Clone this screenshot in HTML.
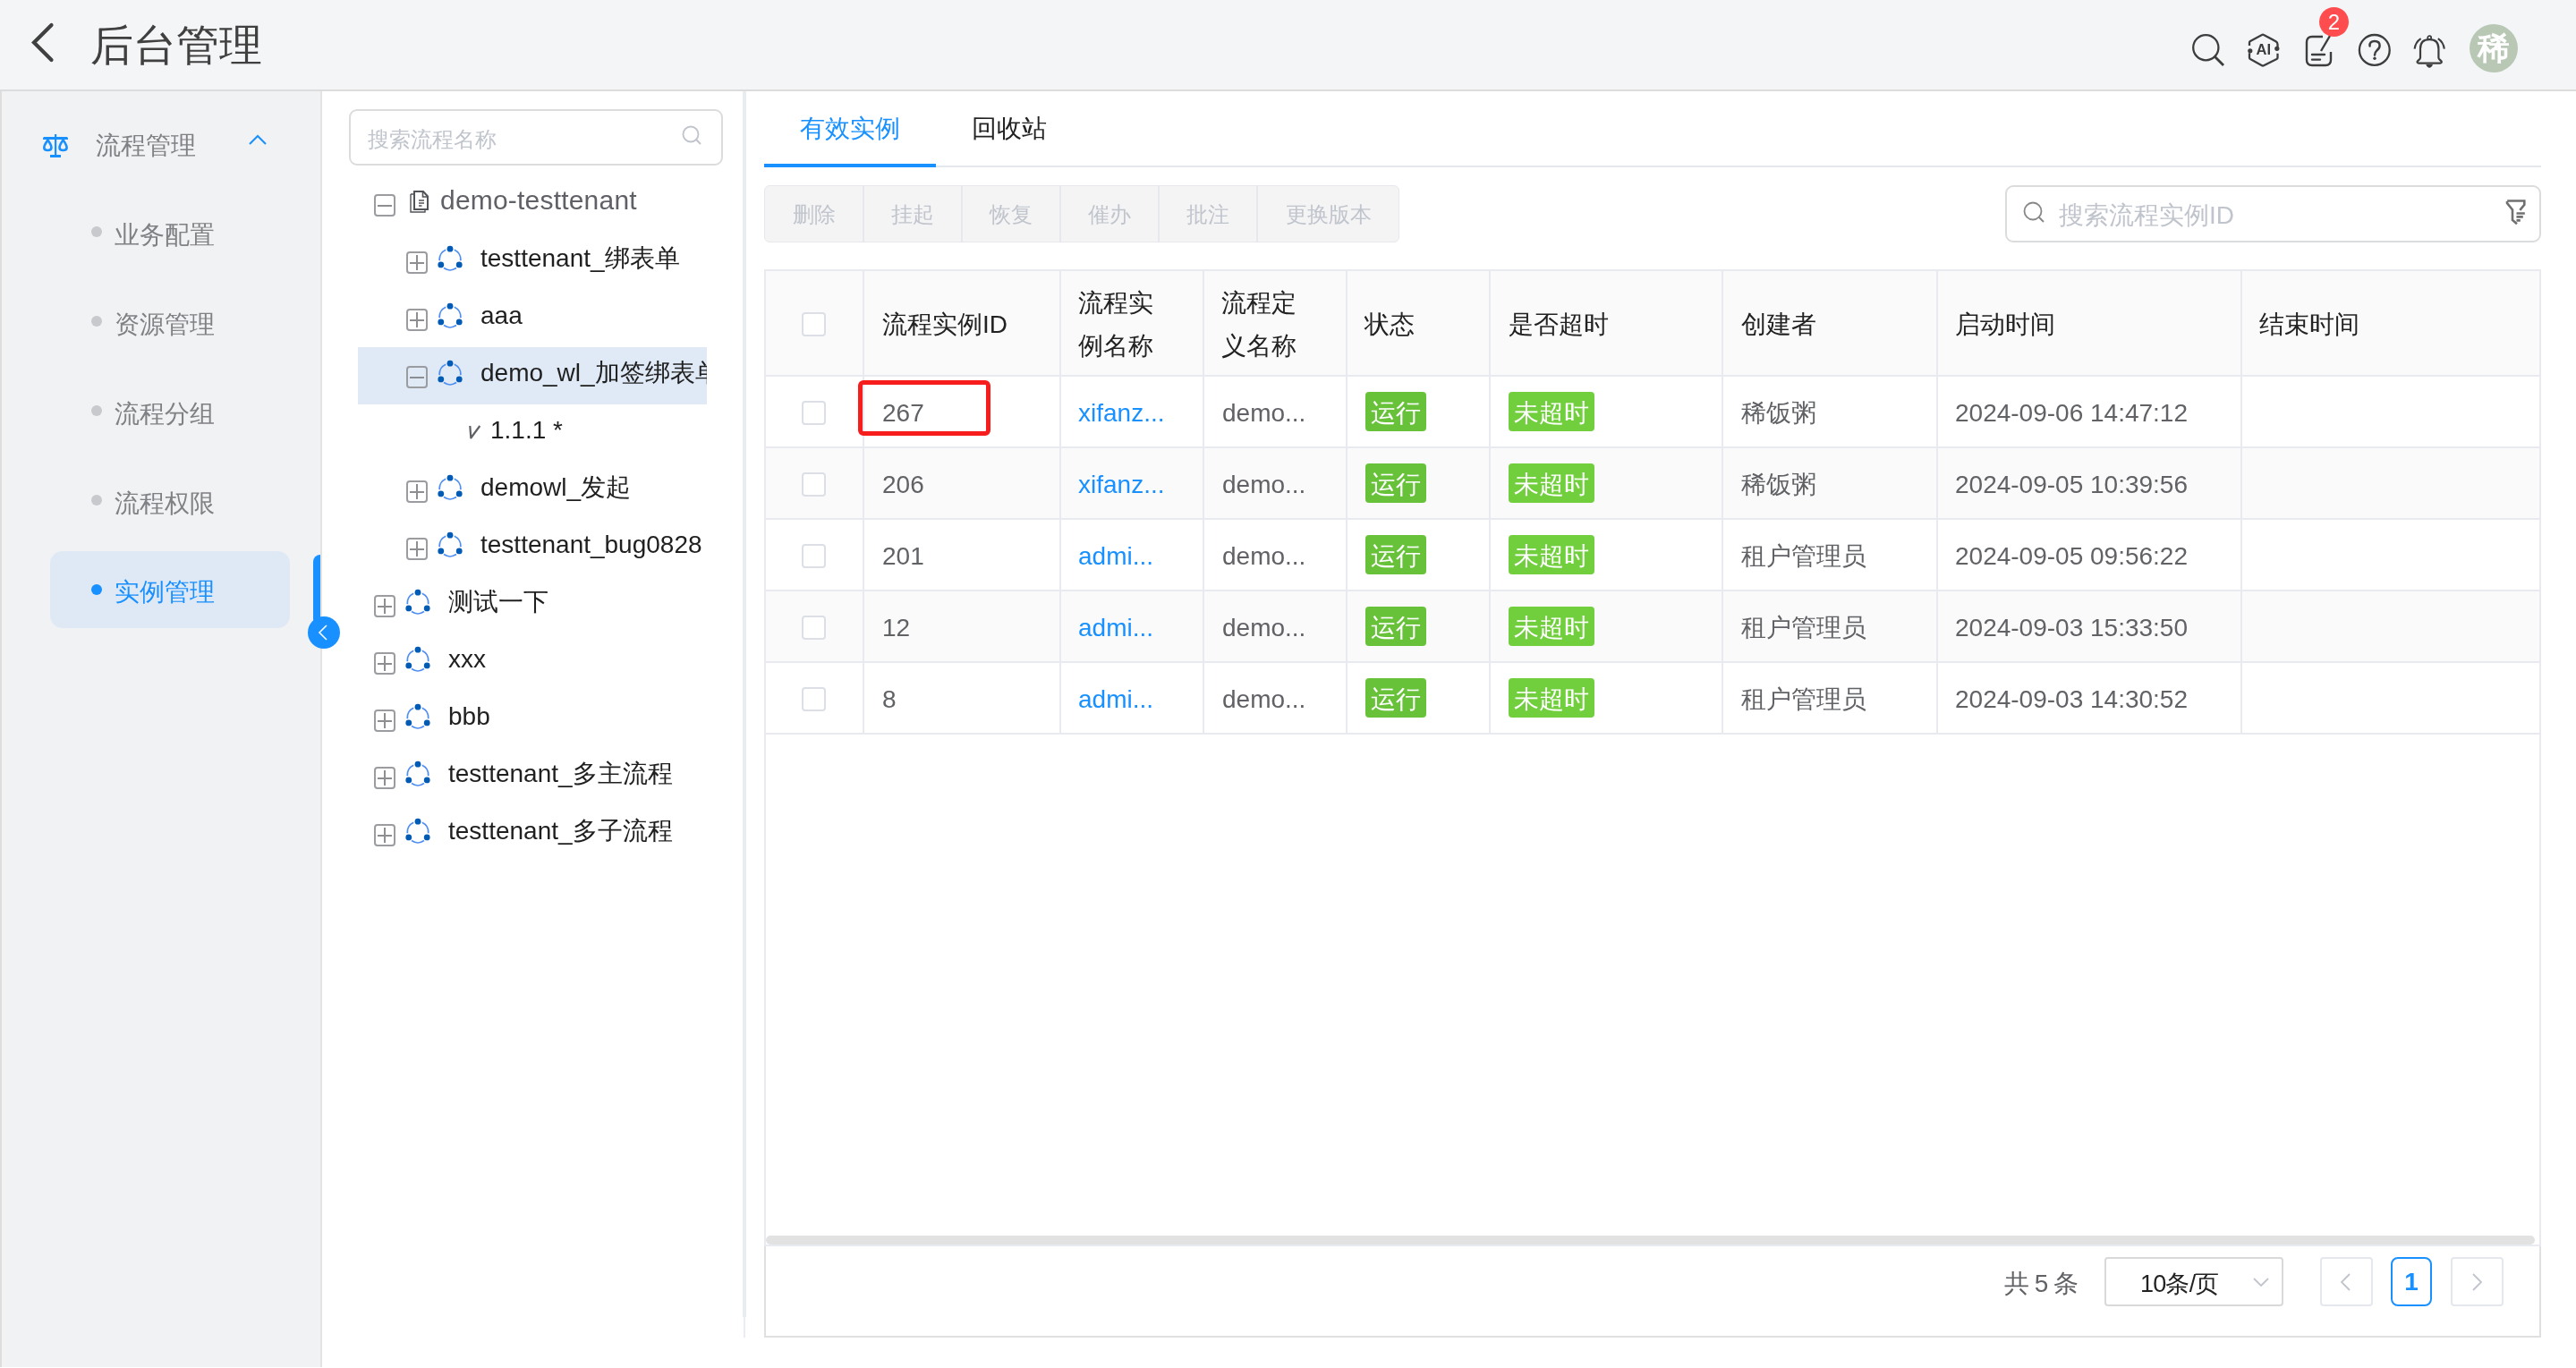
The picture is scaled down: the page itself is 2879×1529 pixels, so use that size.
<!DOCTYPE html>
<html><head><meta charset="utf-8">
<style>
*{box-sizing:border-box;margin:0;padding:0}
html,body{width:2879px;height:1529px;overflow:hidden;background:#fff;will-change:transform;font-family:"Liberation Sans",sans-serif;}
.a{position:absolute;white-space:nowrap}
#hdr{position:absolute;left:0;top:0;width:2879px;height:102px;background:#f4f5f7;border-bottom:2px solid #dcdcdc}
#side{position:absolute;left:0;top:102px;width:360px;height:1426px;background:#f1f2f4;border-left:2px solid #dedede;border-right:2px solid #e3e3e3}
.sub{position:absolute;white-space:nowrap;left:128px;font-size:27.5px;line-height:40px;color:#808184}
.dot{position:absolute;left:102px;width:12px;height:12px;border-radius:50%;background:#c8c9cc}
.tree{position:absolute;white-space:nowrap;font-size:28px;line-height:40px;color:#1f1f1f}
.pbox{position:absolute;width:24px;height:25px;border:2px solid #9a9ca0;border-radius:4px}
.pbox:before{content:"";position:absolute;left:2px;right:2px;top:10px;height:1.5px;background:#8c8e92}
.pbox.p:after{content:"";position:absolute;top:2px;bottom:2px;left:9px;width:2px;background:#8c8e92}
.ficon{position:absolute;width:28px;height:30px}
.btn{position:absolute;white-space:nowrap;top:209px;height:64px;font-size:24px;line-height:62px;color:#c0c4cc;text-align:center}
.th{position:absolute;white-space:nowrap;font-size:28px;line-height:48px;color:#222}
.td{position:absolute;white-space:nowrap;font-size:28px;line-height:40px;color:#606266}
.blue{color:#1890ff}
.tag{position:absolute;white-space:nowrap;height:44px;background:#67c23a;color:#fff;font-size:28px;line-height:47px;overflow:hidden;border-radius:4px;padding:0 6px}
.cb{position:absolute;left:896px;width:27px;height:27px;border:2px solid #dcdfe6;border-radius:4px;background:#fff}
.vl{position:absolute;top:302px;height:518px;width:2px;background:#e8eaf0}
.hl{position:absolute;left:854px;width:1984px;height:2px;background:#e8eaf0}
</style></head><body>
<!-- header -->
<div id="hdr"></div>
<svg class="a" style="left:34px;top:25px" width="28" height="46" viewBox="0 0 28 46"><path d="M23.5 3 L4 22.5 L23.5 42" fill="none" stroke="#404040" stroke-width="4.2" stroke-linecap="round"/></svg>
<div class="a" style="left:101px;top:21px;font-size:48px;line-height:60px;color:#404040">后台管理</div>

<!-- header icons -->
<svg class="a" style="left:2446px;top:35px" width="44" height="44" viewBox="0 0 44 44"><circle cx="19.3" cy="18.2" r="14.1" fill="none" stroke="#3d3d3d" stroke-width="2.3"/><path d="M29.5 28.5 L39 38" stroke="#3d3d3d" stroke-width="2.8"/></svg>
<svg class="a" style="left:2508px;top:35px" width="44" height="44" viewBox="0 0 44 44"><path d="M6 16 L6 12.6 Q6 11.6 7 11 L20 4 Q21 3.4 22 4 L35.5 11.2 Q37.5 12.4 37.5 14.6 L37.5 19.3 M37.5 24.8 L37.5 29.4 Q37.5 30.4 36.5 31 L22 38.2 Q21 38.8 20 38.2 L7 31 Q6 30.4 6 29.4 L6 24.2" fill="none" stroke="#3d3d3d" stroke-width="2.3" stroke-linejoin="round"/><circle cx="6.8" cy="21.8" r="2.6" fill="#3d3d3d"/><circle cx="36.8" cy="19.3" r="2.6" fill="#3d3d3d"/><text x="21.8" y="26" font-size="16.5" font-weight="bold" text-anchor="middle" fill="#3d3d3d" font-family="Liberation Sans">AI</text></svg>
<svg class="a" style="left:2574px;top:38px" width="36" height="38" viewBox="0 0 36 38"><path d="M22 3 L10 3 Q4 3 4 9 L4 29 Q4 35 10 35 L25 35 Q31 35 31 29 L31 20" fill="none" stroke="#3d3d3d" stroke-width="2.4"/><path d="M20 19 L30 2" stroke="#3d3d3d" stroke-width="2.4"/><path d="M10 23 L24 23 M10 28.6 L19 28.6" stroke="#3d3d3d" stroke-width="2.4" stroke-linecap="round"/></svg>
<div class="a" style="left:2592px;top:8px;width:33px;height:33px;border-radius:50%;background:#ff4d4f;color:#fff;font-size:24px;line-height:33px;text-align:center">2</div>
<svg class="a" style="left:2634px;top:36px" width="40" height="40" viewBox="0 0 40 40"><circle cx="19.8" cy="19.9" r="16.9" fill="none" stroke="#3d3d3d" stroke-width="2.3"/><path d="M14.5 15.5 Q14 10 20 10 Q25.6 10 25.6 15 Q25.6 18 22.3 20.6 Q20 22.6 20 25.4" fill="none" stroke="#3d3d3d" stroke-width="2.5" stroke-linecap="round"/><circle cx="20" cy="29.3" r="1.7" fill="#3d3d3d"/></svg>
<svg class="a" style="left:2696px;top:38px" width="40" height="40" viewBox="0 0 40 40"><path d="M2.6 16.6 Q3.6 9.2 9.6 5.2 M35.8 16.6 Q34.8 9.2 28.8 5.2" fill="none" stroke="#3d3d3d" stroke-width="2.1"/><path d="M9 26.5 L9 16.5 Q9 6.2 19.2 6.2 Q29.4 6.2 29.4 16.5 L29.4 26.5 Q29.4 27.8 31 29 Q33.4 30.8 32.6 32 Q32.2 32.6 31.2 32.6 L7.2 32.6 Q6.2 32.6 5.8 32 Q5 30.8 7.4 29 Q9 27.8 9 26.5 Z" fill="none" stroke="#3d3d3d" stroke-width="2.2" stroke-linejoin="round"/><circle cx="19.2" cy="4.2" r="2" fill="none" stroke="#3d3d3d" stroke-width="1.8"/><path d="M15.3 34 L23 34 Q21.5 37.8 19.2 37.8 Q16.8 37.8 15.3 34 Z" fill="#3d3d3d"/></svg>
<div class="a" style="left:2760px;top:27px;width:54px;height:54px;border-radius:50%;background:#b8c8b5;color:#fff;font-size:36px;font-weight:bold;line-height:54px;text-align:center">稀</div>

<!-- sidebar -->
<div id="side"></div>
<svg class="a" style="left:40px;top:140px" width="45" height="45" viewBox="0 0 45 45"><rect x="21" y="10" width="2.2" height="23.5" fill="#1890ff"/><path d="M9 13 L35 13 L36 14.2 L36 16 L8 16 L8 14.2 Z" fill="#1890ff"/><rect x="16" y="33" width="12" height="3" fill="#1890ff"/><path d="M13.4 16.5 C11.5 19.5 9.3 22 9.3 25 Q9.3 28 13.4 28 Q17.4 28 17.4 25 C17.4 22 15.3 19.5 13.4 16.5 Z M30.6 16.5 C28.6 19.5 26.5 22 26.5 25 Q26.5 28 30.6 28 Q34.6 28 34.6 25 C34.6 22 32.6 19.5 30.6 16.5 Z" fill="none" stroke="#1890ff" stroke-width="2.6" stroke-linejoin="round"/></svg>
<div class="a" style="left:107px;top:143px;font-size:28px;line-height:40px;color:#808184">流程管理</div>
<svg class="a" style="left:278px;top:150px" width="20" height="12" viewBox="0 0 20 12"><path d="M1 11 L10 2 L19 11" fill="none" stroke="#1890ff" stroke-width="2"/></svg>
<div class="dot" style="top:253px"></div><div class="sub" style="top:243px">业务配置</div>
<div class="dot" style="top:353px"></div><div class="sub" style="top:343px">资源管理</div>
<div class="dot" style="top:453px"></div><div class="sub" style="top:443px">流程分组</div>
<div class="dot" style="top:553px"></div><div class="sub" style="top:543px">流程权限</div>
<div class="a" style="left:56px;top:616px;width:268px;height:86px;border-radius:14px;background:#dfe9f5"></div>
<div class="dot" style="top:653px;background:#1890ff"></div><div class="sub" style="top:642px;color:#1890ff">实例管理</div>
<div class="a" style="left:350px;top:620px;width:8px;height:80px;border-radius:8px 0 0 8px;background:#1890ff"></div>
<div class="a" style="left:344px;top:689px;width:36px;height:36px;border-radius:50%;background:#1890ff"></div>
<svg class="a" style="left:354px;top:697px" width="14" height="20" viewBox="0 0 14 20"><path d="M11 2 L3 10 L11 18" fill="none" stroke="#fff" stroke-width="1.6"/></svg>

<!-- tree panel -->
<div class="a" style="left:830px;top:102px;width:4px;height:1370px;background:#e9ecf0"></div>
<div class="a" style="left:831px;top:1472px;width:2px;height:23px;background:#e9ecf0"></div>
<div class="a" style="left:390px;top:122px;width:418px;height:63px;border:2px solid #dadcde;border-radius:9px"></div>
<div class="a" style="left:411px;top:139px;font-size:24.3px;line-height:34px;color:#c0c4cc">搜索流程名称</div>
<svg class="a" style="left:762px;top:140px" width="24" height="24" viewBox="0 0 24 24"><circle cx="10" cy="10" r="8.5" fill="none" stroke="#c0c4cc" stroke-width="1.8"/><path d="M16 16 L21 21" stroke="#c0c4cc" stroke-width="2"/></svg>
<svg width="0" height="0" style="position:absolute"><defs><g id="flow"><path d="M17.80 4.22 A11.8 11.8 0 0 1 24.74 16.23 M19.94 24.55 A11.8 11.8 0 0 1 6.06 24.55 M1.26 16.23 A11.8 11.8 0 0 1 8.20 4.22" fill="none" stroke="#4d8ef0" stroke-width="1.8"/><circle cx="13.00" cy="3.20" r="3.4" fill="#005bb5"/><circle cx="23.22" cy="20.90" r="3.4" fill="#005bb5"/><circle cx="2.78" cy="20.90" r="3.4" fill="#005bb5"/></g></defs></svg>
<div class="a" style="left:400px;top:388px;width:390px;height:64px;background:#dfeaf6"></div>
<div class="pbox" style="left:418px;top:217px"></div>
<svg class="a" style="left:458px;top:213px" width="21" height="26" viewBox="0 0 21 26"><path d="M1 4 L5 4 M1 4 L1 24 L17 24 L17 21" fill="none" stroke="#505358" stroke-width="1.4"/><path d="M5 1 L15 1 L20 6.5 L20 21 L5 21 Z" fill="none" stroke="#505358" stroke-width="2"/><path d="M14.5 1 L14.5 7 L20 7" fill="none" stroke="#505358" stroke-width="1.6"/><path d="M10 11 L16 11 M10 14 L16 14 M10 17 L13.5 17" stroke="#505358" stroke-width="1.5"/></svg>
<div class="tree" style="left:492px;top:204px;color:#5f6166;font-size:30px;letter-spacing:0.2px">demo-testtenant</div>
<div class="pbox p" style="left:454px;top:281px"></div>
<svg class="a" style="left:490px;top:275px;overflow:visible" width="26" height="30" viewBox="0 0 26 30"><use href="#flow"/></svg>
<div class="tree" style="left:537px;top:269px">testtenant_绑表单</div>
<div class="pbox p" style="left:454px;top:345px"></div>
<svg class="a" style="left:490px;top:339px;overflow:visible" width="26" height="30" viewBox="0 0 26 30"><use href="#flow"/></svg>
<div class="tree" style="left:537px;top:333px">aaa</div>
<div class="pbox" style="left:454px;top:409px"></div>
<svg class="a" style="left:490px;top:403px;overflow:visible" width="26" height="30" viewBox="0 0 26 30"><use href="#flow"/></svg>
<div class="tree" style="left:537px;top:397px;width:253px;overflow:hidden">demo_wl_加签绑表单</div>
<svg class="a" style="left:520px;top:472px" width="20" height="22" viewBox="0 0 20 22"><path d="M5.3 4 L6.3 17.5 L16.3 4" fill="none" stroke="#5f6166" stroke-width="2.2" stroke-linejoin="round"/></svg>
<div class="tree" style="left:548px;top:461px">1.1.1 *</div>
<div class="pbox p" style="left:454px;top:537px"></div>
<svg class="a" style="left:490px;top:531px;overflow:visible" width="26" height="30" viewBox="0 0 26 30"><use href="#flow"/></svg>
<div class="tree" style="left:537px;top:525px">demowl_发起</div>
<div class="pbox p" style="left:454px;top:601px"></div>
<svg class="a" style="left:490px;top:595px;overflow:visible" width="26" height="30" viewBox="0 0 26 30"><use href="#flow"/></svg>
<div class="tree" style="left:537px;top:589px">testtenant_bug0828</div>
<div class="pbox p" style="left:418px;top:665px"></div>
<svg class="a" style="left:454px;top:659px;overflow:visible" width="26" height="30" viewBox="0 0 26 30"><use href="#flow"/></svg>
<div class="tree" style="left:501px;top:653px">测试一下</div>
<div class="pbox p" style="left:418px;top:729px"></div>
<svg class="a" style="left:454px;top:723px;overflow:visible" width="26" height="30" viewBox="0 0 26 30"><use href="#flow"/></svg>
<div class="tree" style="left:501px;top:717px">xxx</div>
<div class="pbox p" style="left:418px;top:793px"></div>
<svg class="a" style="left:454px;top:787px;overflow:visible" width="26" height="30" viewBox="0 0 26 30"><use href="#flow"/></svg>
<div class="tree" style="left:501px;top:781px">bbb</div>
<div class="pbox p" style="left:418px;top:857px"></div>
<svg class="a" style="left:454px;top:851px;overflow:visible" width="26" height="30" viewBox="0 0 26 30"><use href="#flow"/></svg>
<div class="tree" style="left:501px;top:845px">testtenant_多主流程</div>
<div class="pbox p" style="left:418px;top:921px"></div>
<svg class="a" style="left:454px;top:915px;overflow:visible" width="26" height="30" viewBox="0 0 26 30"><use href="#flow"/></svg>
<div class="tree" style="left:501px;top:909px">testtenant_多子流程</div>
<!-- main -->
<div class="a" style="left:894px;top:124px;font-size:28px;line-height:40px;color:#1890ff">有效实例</div>
<div class="a" style="left:1086px;top:124px;font-size:28px;line-height:40px;color:#222">回收站</div>
<div class="a" style="left:854px;top:185px;width:1986px;height:2px;background:#e4e7ed"></div>
<div class="a" style="left:854px;top:183px;width:192px;height:4px;background:#1890ff"></div>
<div class="a" style="left:854px;top:207px;width:710px;height:64px;background:#f4f4f5;border:1.5px solid #e6e8ee;border-radius:6px"></div>
<div class="btn" style="left:854px;width:111px">删除</div>
<div class="a" style="left:964px;top:208px;width:1.5px;height:62px;background:#e6e8ee"></div>
<div class="btn" style="left:965px;width:110px">挂起</div>
<div class="a" style="left:1074px;top:208px;width:1.5px;height:62px;background:#e6e8ee"></div>
<div class="btn" style="left:1075px;width:110px">恢复</div>
<div class="a" style="left:1184px;top:208px;width:1.5px;height:62px;background:#e6e8ee"></div>
<div class="btn" style="left:1185px;width:110px">催办</div>
<div class="a" style="left:1294px;top:208px;width:1.5px;height:62px;background:#e6e8ee"></div>
<div class="btn" style="left:1295px;width:110px">批注</div>
<div class="a" style="left:1404px;top:208px;width:1.5px;height:62px;background:#e6e8ee"></div>
<div class="btn" style="left:1405px;width:159px">更换版本</div>
<div class="a" style="left:2241px;top:207px;width:599px;height:64px;border:2px solid #dadcde;border-radius:9px"></div>
<svg class="a" style="left:2261px;top:225px" width="26" height="26" viewBox="0 0 26 26"><circle cx="11" cy="11" r="9.5" fill="none" stroke="#888" stroke-width="1.8"/><path d="M17.5 17.5 L23 23" stroke="#888" stroke-width="2"/></svg>
<div class="a" style="left:2301px;top:221px;font-size:28px;line-height:40px;color:#c0c4cc">搜索流程实例ID</div>
<svg class="a" style="left:2790px;top:215px" width="40" height="40" viewBox="0 0 40 40"><path d="M12.2 9.5 L31.3 9.5 L31.3 13.8 L26.3 19.8 M12 10 L12 12 L18 19.5 L18 31 L23 35.2" fill="none" stroke="#707070" stroke-width="2.6" stroke-linejoin="miter"/><path d="M22.5 23.5 L31.8 23.5 M22.5 27.4 L29.8 27.4 M22.5 31.4 L26.8 31.4" stroke="#707070" stroke-width="2.6"/></svg>
<div class="a" style="left:854px;top:301px;width:1986px;height:2px;background:#e8eaf0"></div>
<div class="a" style="left:856px;top:303px;width:1982px;height:117px;background:#fafafa"></div>
<div class="a" style="left:856px;top:500px;width:1982px;height:80px;background:#fafafa"></div>
<div class="a" style="left:856px;top:660px;width:1982px;height:80px;background:#fafafa"></div>
<div class="hl" style="top:419px;width:1986px"></div>
<div class="hl" style="top:499px;width:1986px"></div>
<div class="hl" style="top:579px;width:1986px"></div>
<div class="hl" style="top:659px;width:1986px"></div>
<div class="hl" style="top:739px;width:1986px"></div>
<div class="hl" style="top:819px;width:1986px"></div>
<div class="vl" style="left:964px"></div>
<div class="vl" style="left:1184px"></div>
<div class="vl" style="left:1344px"></div>
<div class="vl" style="left:1504px"></div>
<div class="vl" style="left:1664px"></div>
<div class="vl" style="left:1924px"></div>
<div class="vl" style="left:2164px"></div>
<div class="vl" style="left:2504px"></div>
<div class="a" style="left:854px;top:301px;width:2px;height:1194px;background:#e8eaf0"></div>
<div class="a" style="left:2838px;top:301px;width:2px;height:1092px;background:#e8eaf0"></div>
<div class="cb" style="top:349px"></div>
<div class="th" style="margin-top:1px;left:986px;top:338px">流程实例ID</div>
<div class="th" style="margin-top:1px;left:1205px;top:314px">流程实<br>例名称</div>
<div class="th" style="margin-top:1px;left:1365px;top:314px">流程定<br>义名称</div>
<div class="th" style="margin-top:1px;left:1525px;top:338px">状态</div>
<div class="th" style="margin-top:1px;left:1686px;top:338px">是否超时</div>
<div class="th" style="margin-top:1px;left:1946px;top:338px">创建者</div>
<div class="th" style="margin-top:1px;left:2185px;top:338px">启动时间</div>
<div class="th" style="margin-top:1px;left:2525px;top:338px">结束时间</div>
<div class="cb" style="top:448px"></div>
<div class="td" style="left:986px;top:442px">267</div>
<div class="td blue" style="left:1205px;top:442px">xifanz...</div>
<div class="td" style="left:1366px;top:442px">demo...</div>
<div class="tag" style="left:1526px;top:438px">运行</div>
<div class="tag" style="left:1686px;top:438px;background:#71cf3d">未超时</div>
<div class="td" style="left:1946px;top:442px">稀饭粥</div>
<div class="td" style="left:2185px;top:442px">2024-09-06 14:47:12</div>
<div class="cb" style="top:528px"></div>
<div class="td" style="left:986px;top:522px">206</div>
<div class="td blue" style="left:1205px;top:522px">xifanz...</div>
<div class="td" style="left:1366px;top:522px">demo...</div>
<div class="tag" style="left:1526px;top:518px">运行</div>
<div class="tag" style="left:1686px;top:518px;background:#71cf3d">未超时</div>
<div class="td" style="left:1946px;top:522px">稀饭粥</div>
<div class="td" style="left:2185px;top:522px">2024-09-05 10:39:56</div>
<div class="cb" style="top:608px"></div>
<div class="td" style="left:986px;top:602px">201</div>
<div class="td blue" style="left:1205px;top:602px">admi...</div>
<div class="td" style="left:1366px;top:602px">demo...</div>
<div class="tag" style="left:1526px;top:598px">运行</div>
<div class="tag" style="left:1686px;top:598px;background:#71cf3d">未超时</div>
<div class="td" style="left:1946px;top:602px">租户管理员</div>
<div class="td" style="left:2185px;top:602px">2024-09-05 09:56:22</div>
<div class="cb" style="top:688px"></div>
<div class="td" style="left:986px;top:682px">12</div>
<div class="td blue" style="left:1205px;top:682px">admi...</div>
<div class="td" style="left:1366px;top:682px">demo...</div>
<div class="tag" style="left:1526px;top:678px">运行</div>
<div class="tag" style="left:1686px;top:678px;background:#71cf3d">未超时</div>
<div class="td" style="left:1946px;top:682px">租户管理员</div>
<div class="td" style="left:2185px;top:682px">2024-09-03 15:33:50</div>
<div class="cb" style="top:768px"></div>
<div class="td" style="left:986px;top:762px">8</div>
<div class="td blue" style="left:1205px;top:762px">admi...</div>
<div class="td" style="left:1366px;top:762px">demo...</div>
<div class="tag" style="left:1526px;top:758px">运行</div>
<div class="tag" style="left:1686px;top:758px;background:#71cf3d">未超时</div>
<div class="td" style="left:1946px;top:762px">租户管理员</div>
<div class="td" style="left:2185px;top:762px">2024-09-03 14:30:52</div>
<div class="a" style="left:959px;top:425px;width:148px;height:62px;border:5px solid #f81d1d;border-radius:6px"></div>
<div class="a" style="left:856px;top:1381px;width:1977px;height:10px;border-radius:6px;background:#e2e2e2"></div>
<div class="a" style="left:854px;top:1391px;width:1986px;height:2px;background:#e8ebf2"></div>
<div class="a" style="left:854px;top:1393px;width:1986px;height:102px;border:2px solid #e0e0e0;border-top:none"></div>
<div class="a" style="left:2240px;top:1415px;font-size:28px;line-height:40px;color:#606266;word-spacing:-2px">共 5 条</div>
<div class="a" style="left:2352px;top:1405px;width:200px;height:55px;border:2px solid #d9d9d9;border-radius:4px"></div>
<div class="a" style="left:2392px;top:1415px;font-size:27px;line-height:40px;color:#222;letter-spacing:-0.8px">10条/页</div>
<svg class="a" style="left:2518px;top:1427px" width="18" height="12" viewBox="0 0 18 12"><path d="M1 2 L9 10 L17 2" fill="none" stroke="#c0c4cc" stroke-width="1.8"/></svg>
<div class="a" style="left:2593px;top:1405px;width:59px;height:55px;border:2px solid #e4e7ed;border-radius:4px"></div>
<svg class="a" style="left:2614px;top:1422px" width="14" height="22" viewBox="0 0 14 22"><path d="M12 2 L3 11 L12 20" fill="none" stroke="#c0c4cc" stroke-width="1.8"/></svg>
<div class="a" style="left:2672px;top:1405px;width:46px;height:55px;border:2px solid #1890ff;border-radius:8px;color:#1890ff;font-weight:bold;font-size:28px;line-height:51px;text-align:center">1</div>
<div class="a" style="left:2739px;top:1405px;width:59px;height:55px;border:2px solid #e4e7ed;border-radius:4px"></div>
<svg class="a" style="left:2762px;top:1422px" width="14" height="22" viewBox="0 0 14 22"><path d="M2 2 L11 11 L2 20" fill="none" stroke="#c0c4cc" stroke-width="1.8"/></svg>
</body></html>
